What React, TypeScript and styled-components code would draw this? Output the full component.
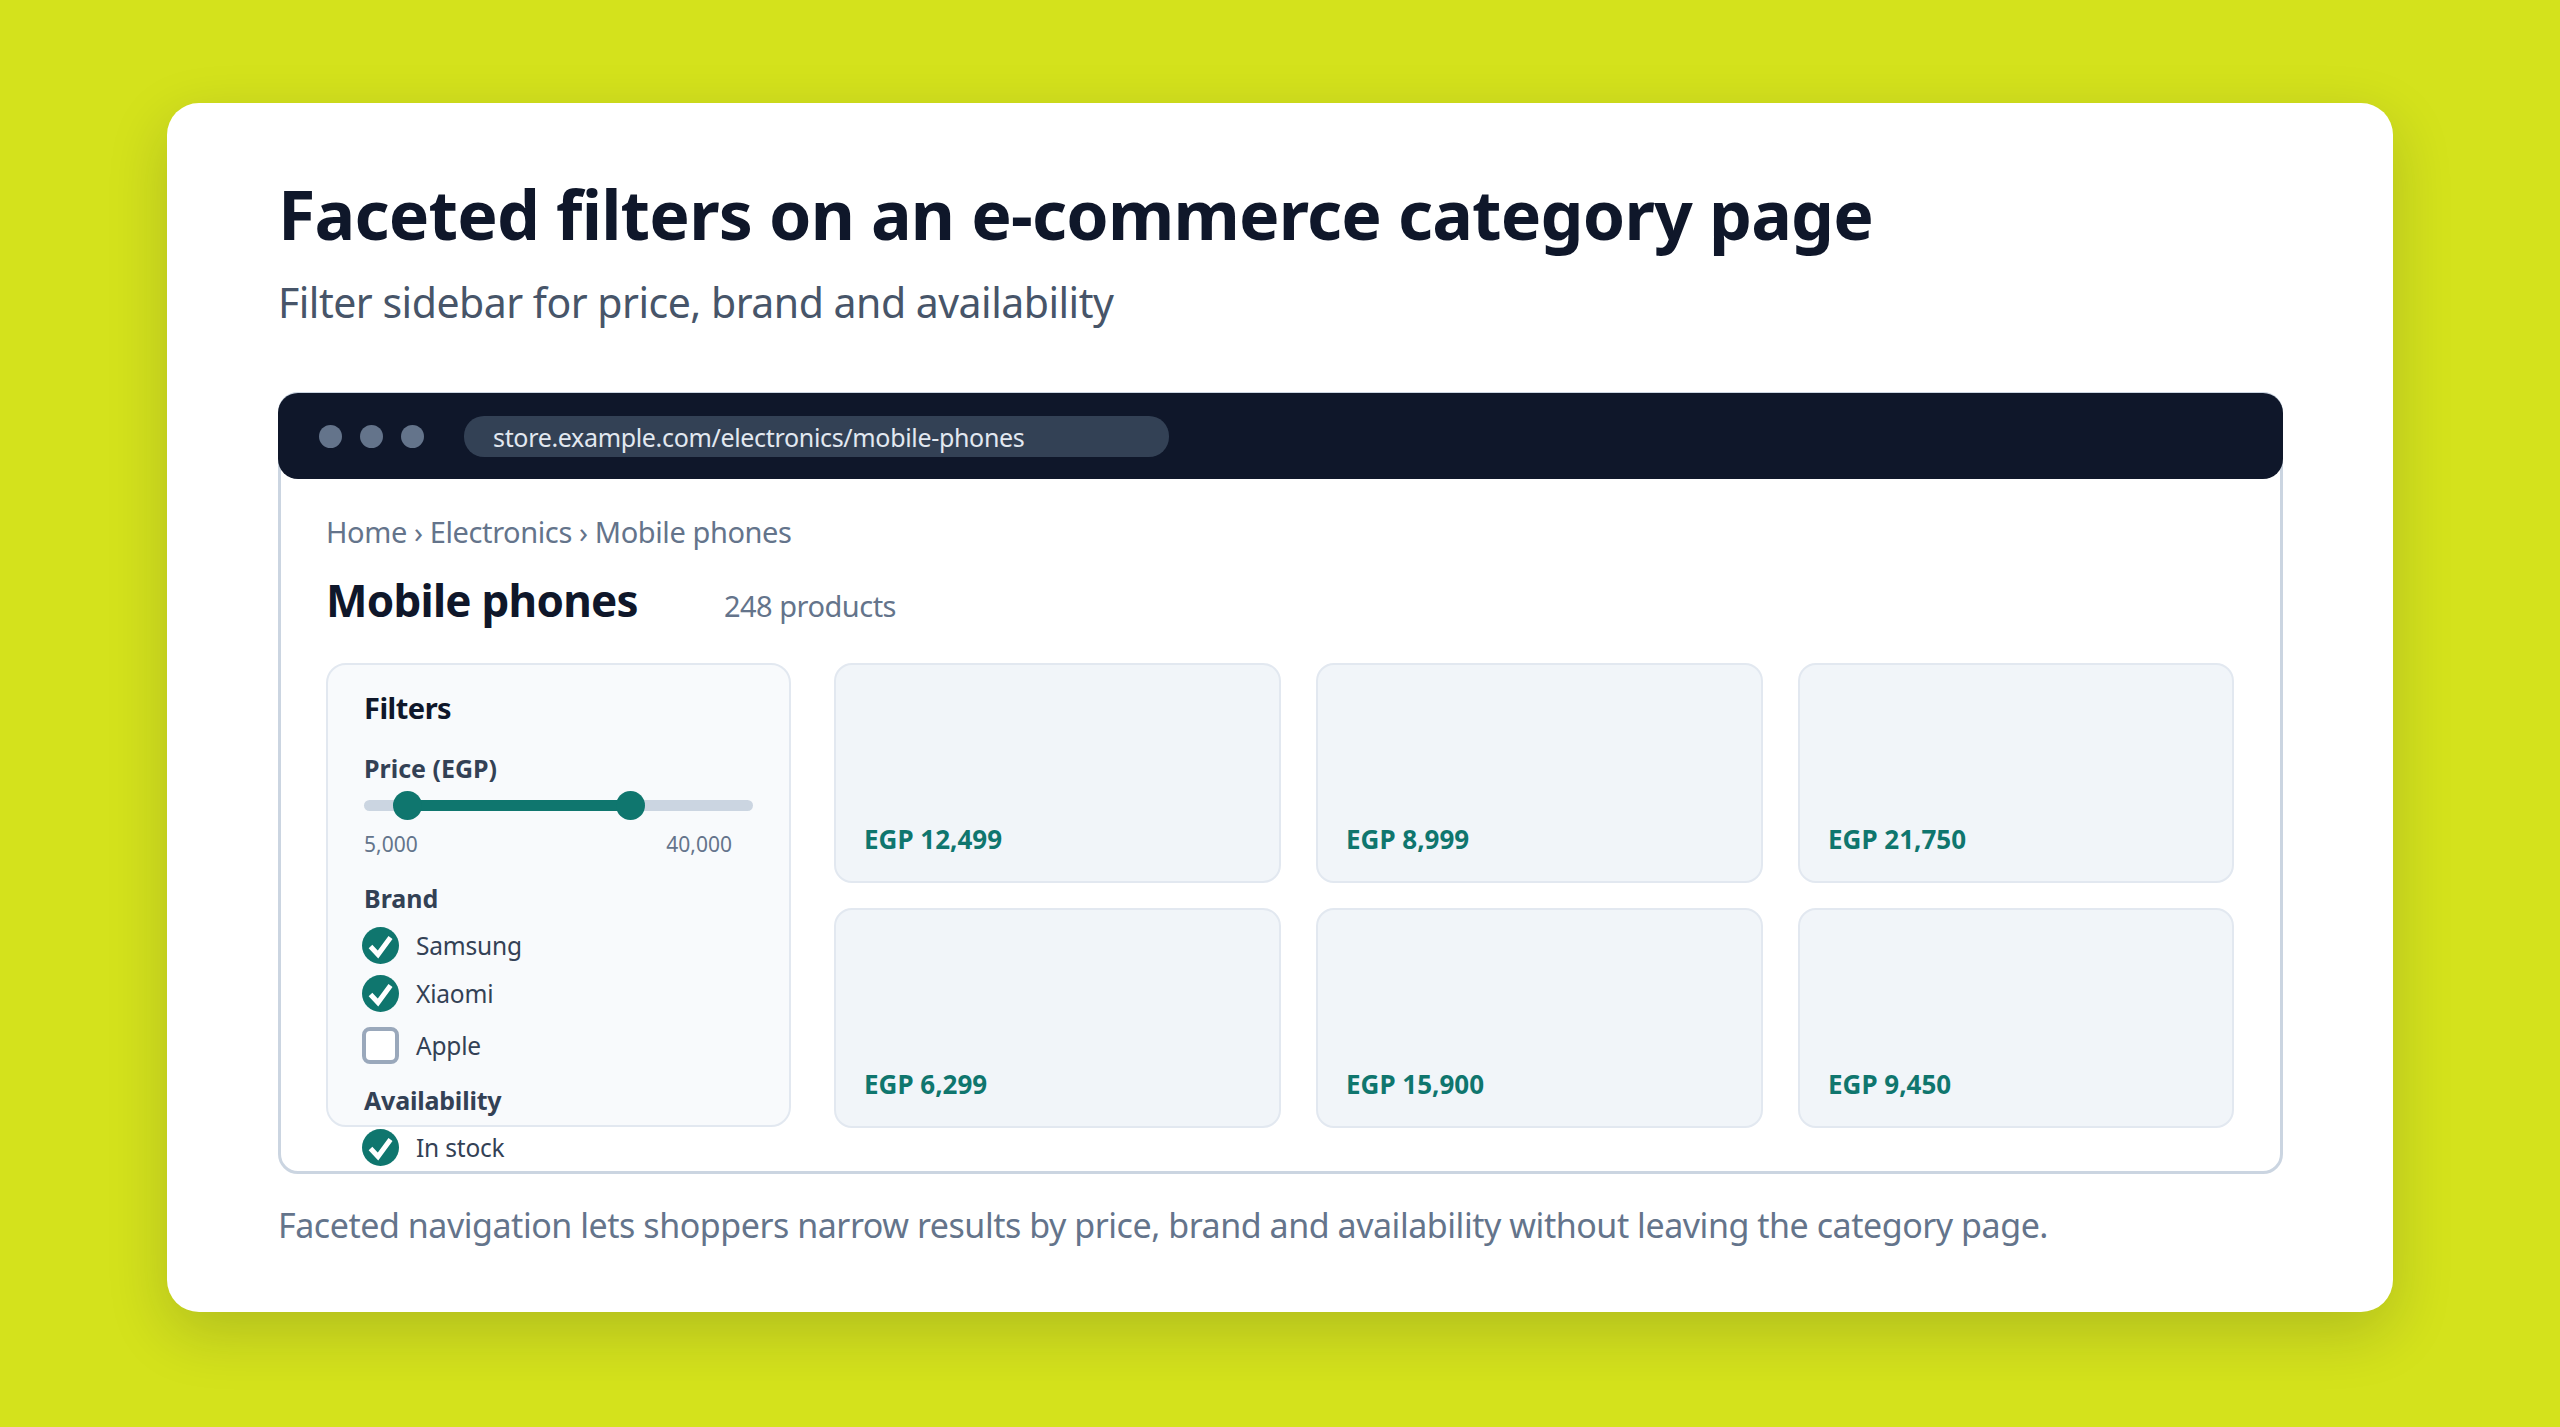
import styled, { createGlobalStyle } from 'styled-components';

const products = ['EGP 12,499', 'EGP 8,999', 'EGP 21,750', 'EGP 6,299', 'EGP 15,900', 'EGP 9,450'];
const brands = [
  { name: 'Samsung', checked: true },
  { name: 'Xiaomi', checked: true },
  { name: 'Apple', checked: false },
];

const CheckMark = ({ checked }: { checked: boolean }) =>
  checked ? (
    <CheckedIcon viewBox="0 0 37 37">
      <circle cx="18.5" cy="18.5" r="18.5" fill="#0f766e" />
      <path d="M8.5 19.5l7.5 8L28.5 10.5" fill="none" stroke="#fff" strokeWidth="5" />
    </CheckedIcon>
  ) : (
    <EmptyBox />
  );

const App = () => (
  <Page>
    <GlobalStyle />
    <Card>
      <Title>Faceted filters on an e-commerce category page</Title>
      <Subtitle>Filter sidebar for price, brand and availability</Subtitle>
      <BrowserWindow>
        <ChromeBar>
          <Dot />
          <Dot />
          <Dot />
          <UrlPill>store.example.com/electronics/mobile-phones</UrlPill>
        </ChromeBar>
        <Content>
          <Breadcrumb>Home › Electronics › Mobile phones</Breadcrumb>
          <Heading>
            <PageName>Mobile phones</PageName>
            <Count>248 products</Count>
          </Heading>
          <Layout>
            <Sidebar>
              <SidebarTitle>Filters</SidebarTitle>
              <PriceLabel>Price (EGP)</PriceLabel>
              <Slider>
                <SliderFill />
                <Thumb $left={29} />
                <Thumb $left={252} />
              </Slider>
              <SliderLabels>
                <span>5,000</span>
                <span>40,000</span>
              </SliderLabels>
              <BrandLabel>Brand</BrandLabel>
              {brands.map((brand) => (
                <CheckRow key={brand.name} $boxed={!brand.checked}>
                  <CheckMark checked={brand.checked} />
                  {brand.name}
                </CheckRow>
              ))}
              <AvailabilityLabel>Availability</AvailabilityLabel>
              <CheckRow>
                <CheckMark checked />
                In stock
              </CheckRow>
            </Sidebar>
            <ProductGrid>
              {products.map((price) => (
                <ProductCard key={price}>
                  <Price>{price}</Price>
                </ProductCard>
              ))}
            </ProductGrid>
          </Layout>
        </Content>
      </BrowserWindow>
      <Caption>Faceted navigation lets shoppers narrow results by price, brand and availability without leaving the category page.</Caption>
    </Card>
  </Page>
);

const GlobalStyle = createGlobalStyle`
  html, body {
    margin: 0;
    padding: 0;
  }
  * {
    box-sizing: border-box;
  }
  body {
    font-family: "Noto Sans", "Open Sans", sans-serif;
  }
`;

const Page = styled.div`
  width: 2560px;
  height: 1427px;
  padding: 103px 167px 115px;
  background: #d4e21c;
  overflow: hidden;
`;

const Card = styled.div`
  height: 1209px;
  padding: 63px 110px 0 111px;
  background: #fff;
  border-radius: 32px;
  box-shadow: 0 20px 60px rgba(15, 23, 42, 0.18);
`;

const Title = styled.h1`
  margin: 0;
  font-size: 68px;
  line-height: 96px;
  letter-spacing: -0.8px;
  font-weight: 700;
  color: #0f172a;
`;

const Subtitle = styled.p`
  margin: 11px 0 0;
  font-size: 41px;
  line-height: 58px;
  letter-spacing: -0.5px;
  color: #475569;
`;

const BrowserWindow = styled.div`
  height: 782px;
  margin-top: 61px;
  border: 3px solid #cbd5e1;
  border-radius: 20px;
`;

const ChromeBar = styled.div`
  display: flex;
  align-items: center;
  gap: 18px;
  height: 86px;
  margin: -2px -3px 0;
  padding: 0 41px;
  background: #0f172a;
  border-radius: 20px;
`;

const Dot = styled.span`
  width: 23px;
  height: 23px;
  border-radius: 50%;
  background: #64748b;
`;

const UrlPill = styled.div`
  width: 705px;
  height: 41px;
  margin-left: 22px;
  padding-left: 29px;
  border-radius: 20px;
  background: #334155;
  color: #e2e8f0;
  font-size: 25px;
  line-height: 43px;
  letter-spacing: -0.33px;
`;

const Content = styled.div`
  padding: 32px 45px 0;
`;

const Breadcrumb = styled.div`
  font-size: 29px;
  line-height: 42px;
  letter-spacing: -0.4px;
  color: #64748b;
`;

const Heading = styled.div`
  display: flex;
  align-items: baseline;
  gap: 86px;
  margin-top: 16px;
`;

const PageName = styled.h2`
  margin: 0;
  font-size: 44px;
  line-height: 62px;
  letter-spacing: -0.75px;
  font-weight: 700;
  color: #0f172a;
`;

const Count = styled.span`
  font-size: 29px;
  letter-spacing: -0.5px;
  color: #64748b;
`;

const Layout = styled.div`
  display: grid;
  grid-template-columns: 465px 1fr;
  gap: 43px;
  height: 464px;
  margin-top: 32px;
`;

const Sidebar = styled.div`
  height: 464px;
  padding: 23px 36px 0;
  background: #f8fafc;
  border: 2px solid #e2e8f0;
  border-radius: 20px;
`;

const SidebarTitle = styled.div`
  font-size: 29px;
  line-height: 40px;
  letter-spacing: -0.5px;
  font-weight: 700;
  color: #0f172a;
`;

const FacetLabel = styled.div`
  font-size: 25px;
  line-height: 36px;
  font-weight: 700;
  color: #334155;
`;

const PriceLabel = styled(FacetLabel)`
  margin-top: 22px;
`;

const BrandLabel = styled(FacetLabel)`
  margin: 21px 0 5px;
`;

const AvailabilityLabel = styled(FacetLabel)`
  margin: 13px 0 5px;
  letter-spacing: -0.2px;
`;

const Slider = styled.div`
  position: relative;
  height: 11px;
  margin-top: 14px;
  border-radius: 6px;
  background: #cbd5e1;
`;

const SliderFill = styled.div`
  position: absolute;
  left: 44px;
  width: 223px;
  top: 0;
  bottom: 0;
  background: #0f766e;
`;

const Thumb = styled.span<{ $left: number }>`
  position: absolute;
  left: ${({ $left }) => $left}px;
  top: -9px;
  width: 29px;
  height: 29px;
  border-radius: 50%;
  background: #0f766e;
`;

const SliderLabels = styled.div`
  display: flex;
  justify-content: space-between;
  width: 368px;
  margin-top: 18px;
  font-size: 21px;
  line-height: 30px;
  color: #64748b;
`;

const CheckRow = styled.div<{ $boxed?: boolean }>`
  display: flex;
  align-items: center;
  gap: 17px;
  height: 48px;
  margin-top: ${({ $boxed }) => ($boxed ? '4px' : '0')};
  margin-left: -2px;
  font-size: 24.5px;
  letter-spacing: -0.2px;
  color: #334155;
`;

const CheckedIcon = styled.svg`
  width: 37px;
  height: 37px;
  flex: none;
`;

const EmptyBox = styled.span`
  width: 37px;
  height: 37px;
  flex: none;
  background: #fff;
  border: 4px solid #9aa8bb;
  border-radius: 8px;
`;

const ProductGrid = styled.div`
  display: grid;
  grid-template-columns: 447px 447px 436px;
  grid-template-rows: 220px 220px;
  gap: 25px 35px;
`;

const ProductCard = styled.div`
  display: flex;
  align-items: flex-end;
  padding: 0 28px 24px;
  background: #f1f5f9;
  border: 2px solid #e2e8f0;
  border-radius: 18px;
`;

const Price = styled.div`
  font-size: 26px;
  line-height: 36px;
  font-weight: 700;
  color: #0f766e;
`;

const Caption = styled.p`
  margin: 26px 0 0;
  font-size: 34px;
  line-height: 50px;
  letter-spacing: -0.46px;
  color: #64748b;
`;

export default App;
